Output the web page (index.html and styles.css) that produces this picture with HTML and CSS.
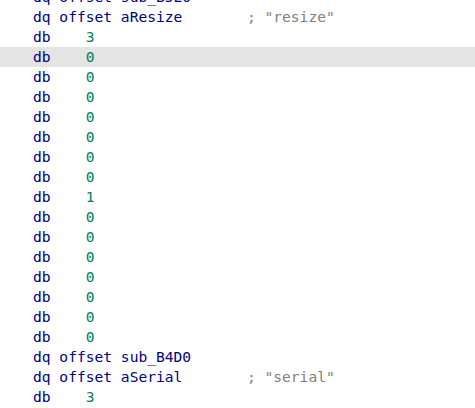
FILE: index.html
```html
<!DOCTYPE html>
<html>
<head>
<meta charset="utf-8">
<link rel="stylesheet" href="styles.css">
</head>
<body>
<div class="listing">
<div class="row"><span class="kw">dq offset sub_B5E0</span></div>
<div class="row"><span class="kw">dq offset aResize</span>       <span class="cmt">; "resize"</span></div>
<div class="row"><span class="kw">db</span>    <span class="num">3</span></div>
<div class="row sel"><span class="kw">db</span>    <span class="num">0</span></div>
<div class="row"><span class="kw">db</span>    <span class="num">0</span></div>
<div class="row"><span class="kw">db</span>    <span class="num">0</span></div>
<div class="row"><span class="kw">db</span>    <span class="num">0</span></div>
<div class="row"><span class="kw">db</span>    <span class="num">0</span></div>
<div class="row"><span class="kw">db</span>    <span class="num">0</span></div>
<div class="row"><span class="kw">db</span>    <span class="num">0</span></div>
<div class="row"><span class="kw">db</span>    <span class="num">1</span></div>
<div class="row"><span class="kw">db</span>    <span class="num">0</span></div>
<div class="row"><span class="kw">db</span>    <span class="num">0</span></div>
<div class="row"><span class="kw">db</span>    <span class="num">0</span></div>
<div class="row"><span class="kw">db</span>    <span class="num">0</span></div>
<div class="row"><span class="kw">db</span>    <span class="num">0</span></div>
<div class="row"><span class="kw">db</span>    <span class="num">0</span></div>
<div class="row"><span class="kw">db</span>    <span class="num">0</span></div>
<div class="row"><span class="kw">dq offset sub_B4D0</span></div>
<div class="row"><span class="kw">dq offset aSerial</span>       <span class="cmt">; "serial"</span></div>
<div class="row"><span class="kw">db</span>    <span class="num">3</span></div>
</div>
</body>
</html>
```
FILE: styles.css
```css
html, body {
  margin: 0;
  padding: 0;
  background: #ffffff;
  overflow: hidden;
}
.listing {
  margin-top: -13px;
  font-family: "DejaVu Sans Mono", "Liberation Mono", monospace;
  font-size: 14.6px;
}
.row {
  height: 20px;
  line-height: 20px;
  padding-left: 33px;
  white-space: pre;
}
.row.sel {
  background: #e4e4e4;
}
.kw {
  color: #000080;
}
.num {
  color: #008060;
}
.cmt {
  color: #808080;
  margin-left: 3px;
}
```
